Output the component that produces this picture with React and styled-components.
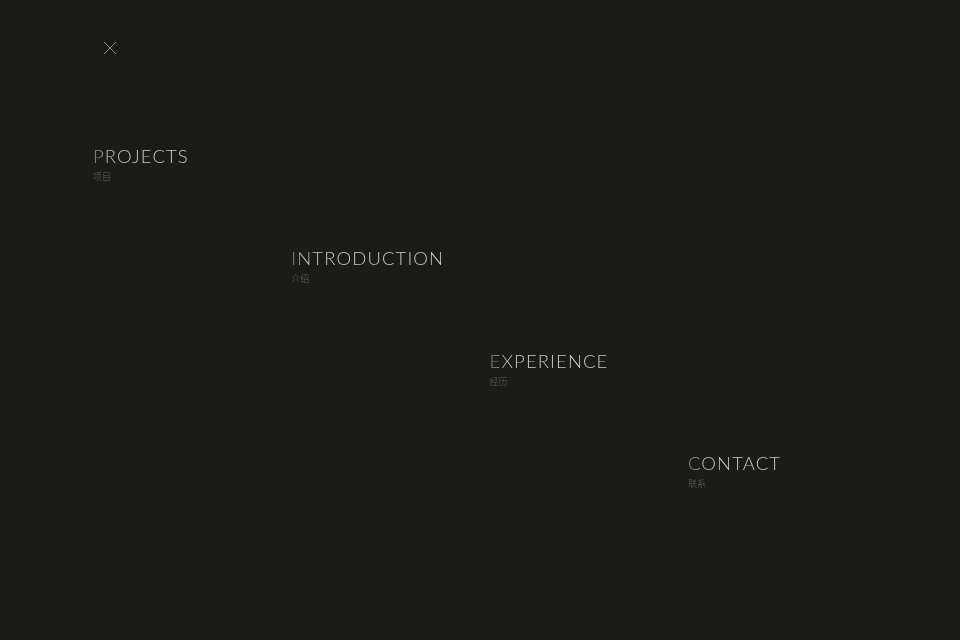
import React from "react";
import styled, { createGlobalStyle } from "styled-components";

const Global = createGlobalStyle`
  html, body { margin: 0; padding: 0; background: #1b1b19; }
`;

const Page = styled.main`
  width: 960px;
  height: 640px;
  box-sizing: border-box;
  overflow: hidden;
  background: #1b1b19;
  padding: 41px 0 0 93px;
  font-family: "Lato", "Noto Sans CJK SC", sans-serif;
`;

const CloseButton = styled.button`
  display: block;
  width: 14px;
  height: 14px;
  margin: 0 0 0 10px;
  padding: 0;
  border: 0;
  background: none;
  line-height: 0;
`;

const Menu = styled.nav`
  display: grid;
  grid-template-columns: repeat(4, 198.3px);
  grid-auto-rows: 102.4px;
  margin-top: 89px;
`;

const Item = styled.a`
  display: block;
  grid-column: ${(p) => p.$col};
  grid-row: ${(p) => p.$col};
`;

const Title = styled.div`
  font-size: 18.5px;
  font-weight: 300;
  line-height: 24px;
  letter-spacing: 1.12px;
  white-space: nowrap;
  background: linear-gradient(90deg, #7c7c78 0, #c4c4c0 14px, #d2d2ce 40px);
  -webkit-background-clip: text;
  background-clip: text;
  color: transparent;
`;

const Sub = styled.div`
  margin-top: 1.8px;
  font-family: "Noto Sans CJK SC", sans-serif;
  font-size: 9px;
  font-weight: 300;
  line-height: 13px;
  background: linear-gradient(90deg, #666663, #666663);
  -webkit-background-clip: text;
  background-clip: text;
  color: transparent;
`;

const items = [
  ["PROJECTS", "项目"],
  ["INTRODUCTION", "介绍"],
  ["EXPERIENCE", "经历"],
  ["CONTACT", "联系"],
];

export default function App() {
  return (
    <Page>
      <Global />
      <CloseButton aria-label="close">
        <svg width="14" height="14" viewBox="0 0 14 14" fill="none">
          <path d="M1 1L13 13M13 1L1 13" stroke="#8a8a87" strokeWidth="1" />
        </svg>
      </CloseButton>
      <Menu>
        {items.map(([en, zh], i) => (
          <Item key={en} $col={i + 1}>
            <Title>{en}</Title>
            <Sub>{zh}</Sub>
          </Item>
        ))}
      </Menu>
    </Page>
  );
}
